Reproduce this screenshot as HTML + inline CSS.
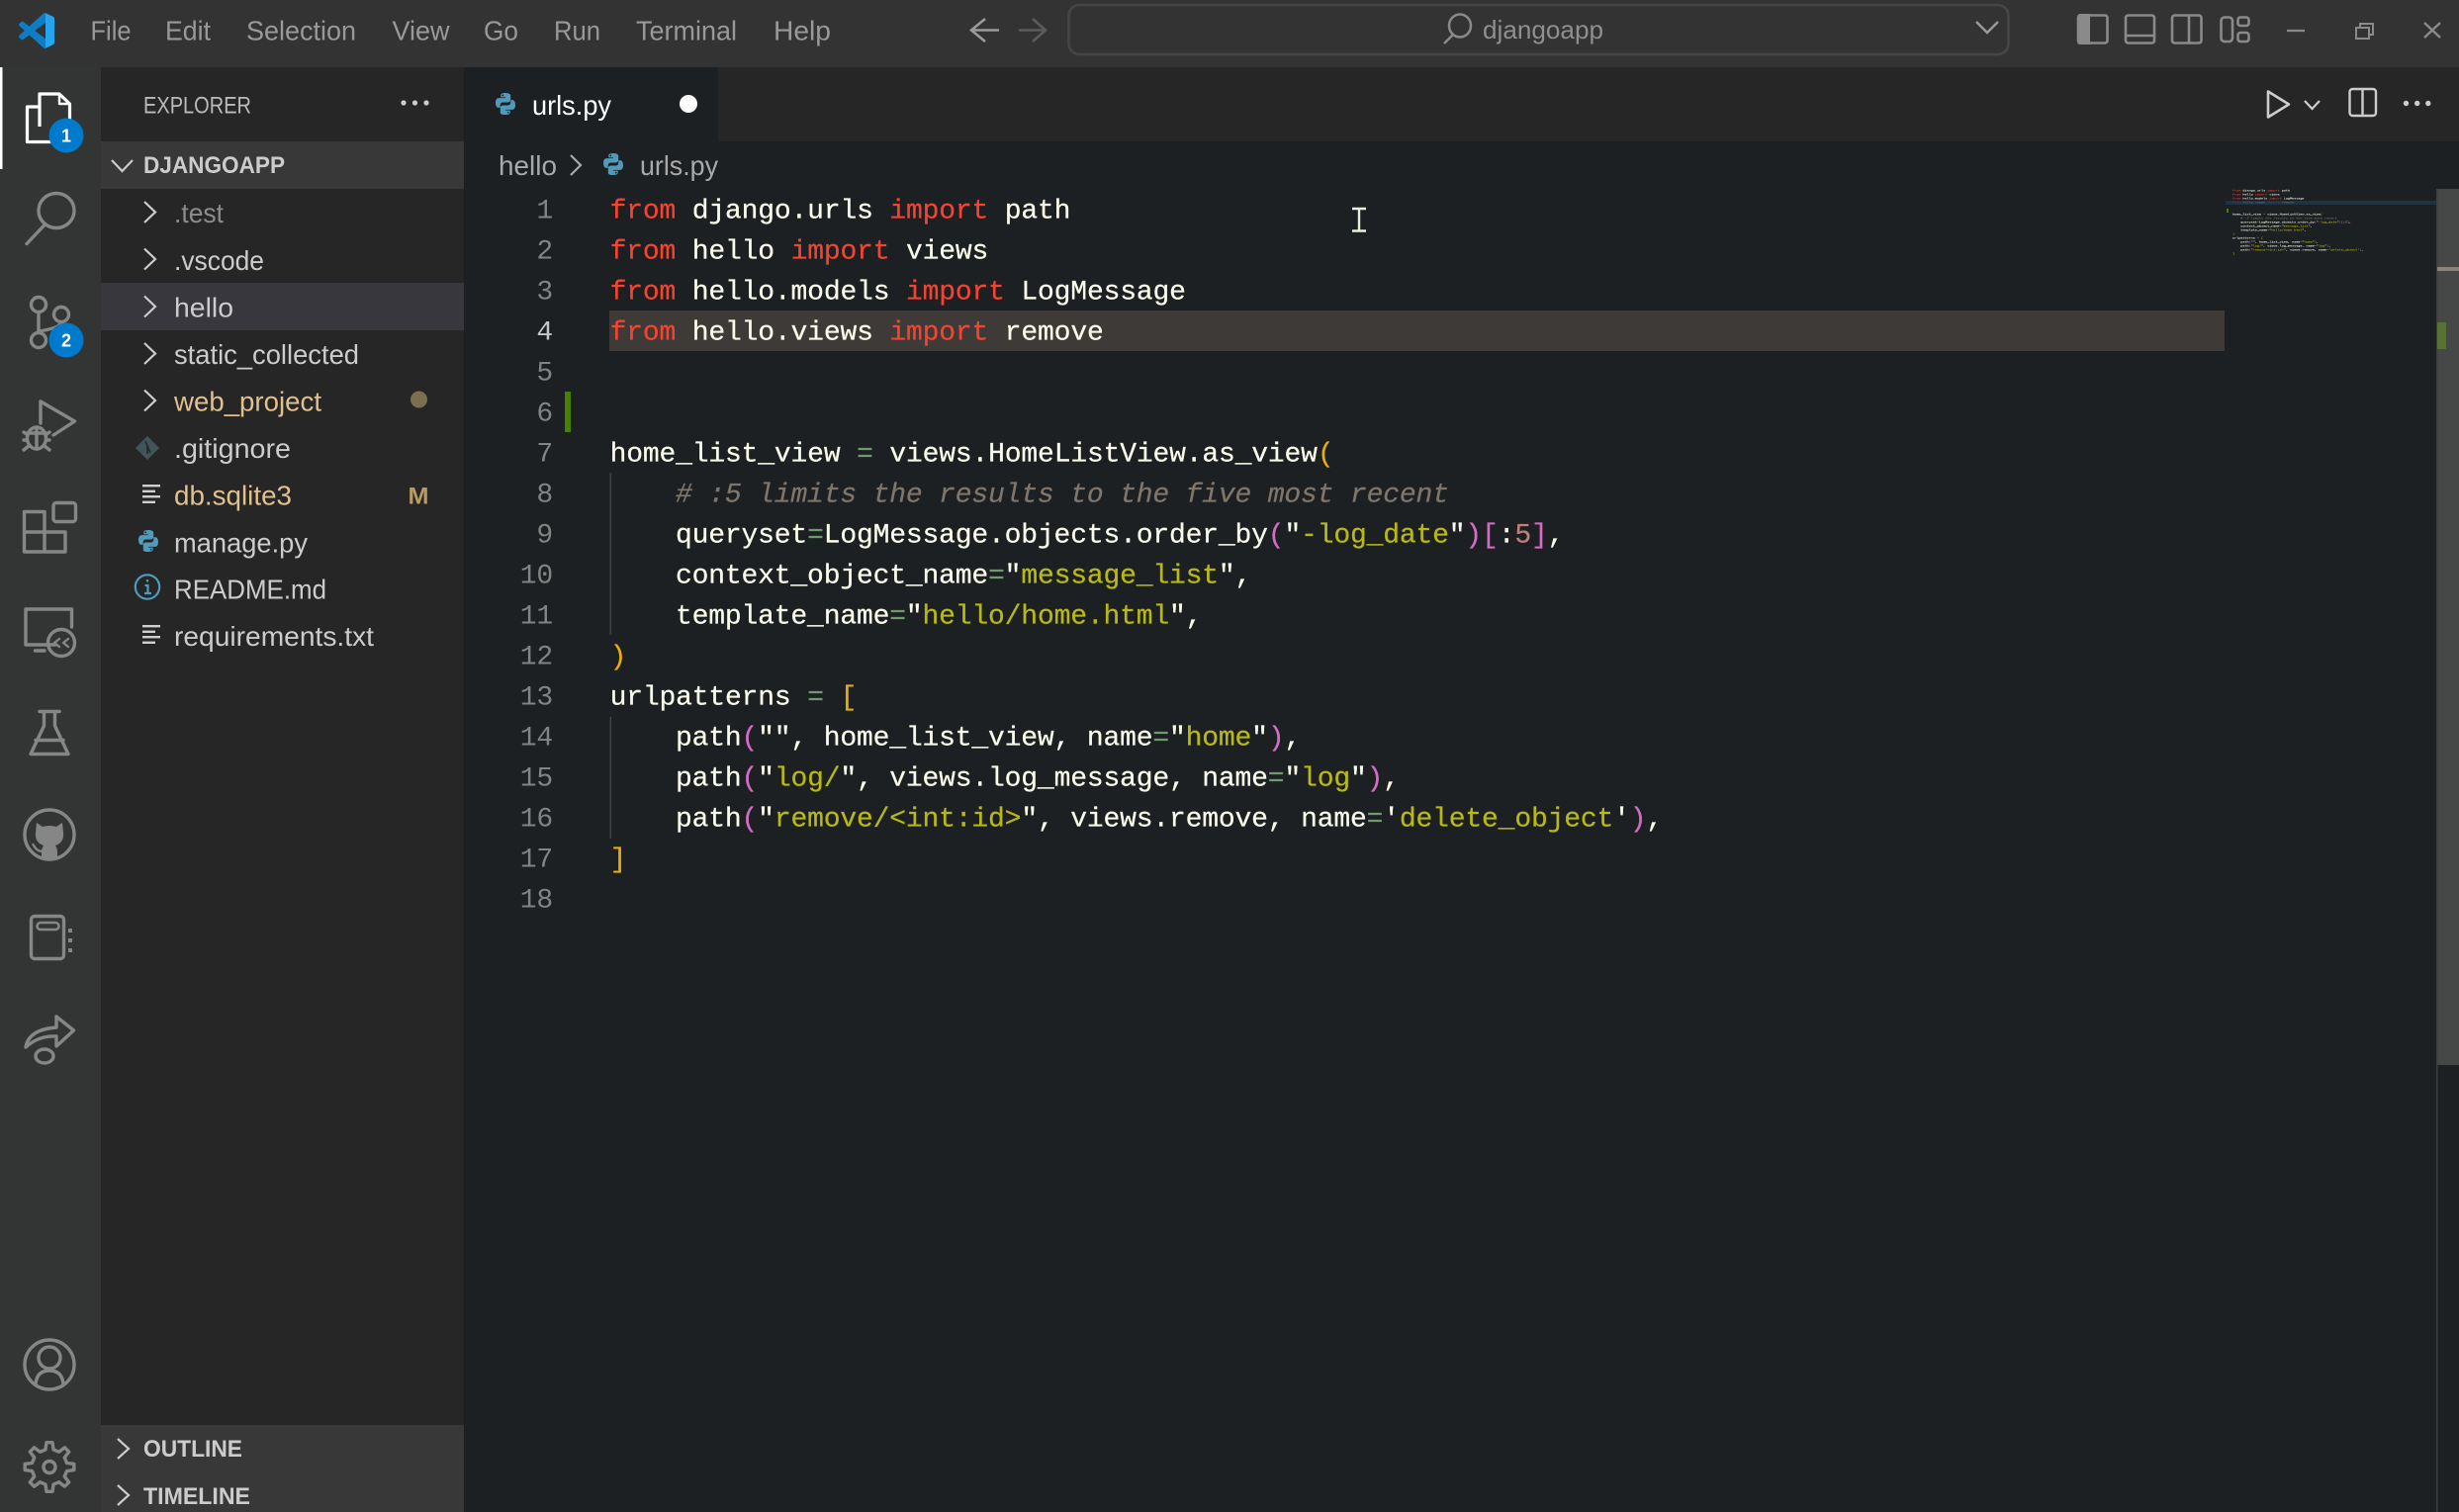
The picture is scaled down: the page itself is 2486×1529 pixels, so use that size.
<!DOCTYPE html>
<html lang="en">
<head>
<meta charset="utf-8">
<title>urls.py - djangoapp</title>
<style>
html,body{margin:0;padding:0;background:#1c2022;width:2486px;height:1529px;overflow:hidden}
svg{display:block;position:absolute;left:0;top:0}
text{font-family:"Liberation Sans",Arial,sans-serif;white-space:pre}
.c text,.c{font-family:"Liberation Mono","DejaVu Sans Mono",monospace;font-size:28px;letter-spacing:-.17px;fill:#fbfbec;stroke:#fbfbec;stroke-width:.25px}
.ln{font-family:"Liberation Mono","DejaVu Sans Mono",monospace;font-size:28px;letter-spacing:-.17px;fill:#828484;text-anchor:end}
.k{fill:#f5432f;stroke:#f5432f}.e{fill:#6f9a6f;stroke:#6f9a6f}.s{fill:#b8b914;stroke:#b8b914}.g{fill:#e6ad0b;stroke:#e6ad0b}.p{fill:#d46cc4;stroke:#d46cc4}.cm{fill:#7f756b;stroke:#7f756b;font-style:italic}.n{fill:#c07f7f;stroke:#c07f7f}
.m{font-size:28px;fill:#999}
.t{font-size:28px;fill:#cccccc}
.h{font-size:24px;font-weight:bold;fill:#cccccc}
.ic{fill:none;stroke:#868686;stroke-width:3.4;stroke-linecap:round;stroke-linejoin:round}
.ti{fill:none;stroke:#8a8a8a;stroke-width:2.6;stroke-linejoin:round}
.ch{fill:none;stroke:#cccccc;stroke-width:2.2}
</style>
</head>
<body>
<svg width="2486" height="1529" viewBox="0 0 2486 1529" xmlns="http://www.w3.org/2000/svg">
<defs>
<g id="py"><path fill="#519aba" fill-rule="evenodd" d="M11.9 1C7 1 7.3 3.1 7.3 3.1V5.4h4.7v.7H5.4S2 5.7 2 10.9c0 5.1 3 5 3 5h1.7v-2.4s-.1-3 2.9-3h4.8s2.8 0 2.8-2.7V3.9S17.7 1 11.9 1zM9.3 2.5a.9.9 0 1 1 0 1.8.9.9 0 0 1 0-1.8z"/><path fill="#519aba" fill-rule="evenodd" d="M12.1 23c4.9 0 4.6-2.1 4.6-2.1v-2.3H12v-.7h6.6s3.4.4 3.4-4.8c0-5.1-3-5-3-5h-1.7v2.4s.1 3-2.9 3H9.6s-2.8 0-2.8 2.7v4.9S6.3 23 12.1 23zm2.6-1.5a.9.9 0 1 1 0-1.8.9.9 0 0 1 0 1.8z"/></g>
<g id="lines" fill="#cfcfcf"><rect x="0" y="0" width="18" height="2.4"/><rect x="0" y="5.6" width="13" height="2.4"/><rect x="0" y="11" width="18" height="2.4"/><rect x="0" y="16.6" width="13" height="2.4"/></g>
<path id="chev" class="ch" d="M0 -10.5 L11 0 L0 10.5"/>
<g id="code" class="c">
<text x="616.6" y="220.5"><tspan class="k">from</tspan> django.urls <tspan class="k">import</tspan> path</text>
<text x="616.6" y="261.5"><tspan class="k">from</tspan> hello <tspan class="k">import</tspan> views</text>
<text x="616.6" y="302.5"><tspan class="k">from</tspan> hello.models <tspan class="k">import</tspan> LogMessage</text>
<text x="616.6" y="343.5"><tspan class="k">from</tspan> hello.views <tspan class="k">import</tspan> remove</text>
<text x="616.6" y="466.5">home_list_view <tspan class="e">=</tspan> views.HomeListView.as_view<tspan class="g">(</tspan></text>
<text x="683" y="507.5"><tspan class="cm"># :5 limits the results to the five most recent</tspan></text>
<text x="683" y="548.5">queryset<tspan class="e">=</tspan>LogMessage.objects.order_by<tspan class="p">(</tspan>"<tspan class="s">-log_date</tspan>"<tspan class="p">)[</tspan>:<tspan class="n">5</tspan><tspan class="p">]</tspan>,</text>
<text x="683" y="589.5">context_object_name<tspan class="e">=</tspan>"<tspan class="s">message_list</tspan>",</text>
<text x="683" y="630.5">template_name<tspan class="e">=</tspan>"<tspan class="s">hello/home.html</tspan>",</text>
<text x="616.6" y="671.5"><tspan class="g">)</tspan></text>
<text x="616.6" y="712.5">urlpatterns <tspan class="e">=</tspan> <tspan class="g">[</tspan></text>
<text x="683" y="753.5">path<tspan class="p">(</tspan>"", home_list_view, name<tspan class="e">=</tspan>"<tspan class="s">home</tspan>"<tspan class="p">)</tspan>,</text>
<text x="683" y="794.5">path<tspan class="p">(</tspan>"<tspan class="s">log/</tspan>", views.log_message, name<tspan class="e">=</tspan>"<tspan class="s">log</tspan>"<tspan class="p">)</tspan>,</text>
<text x="683" y="835.5">path<tspan class="p">(</tspan>"<tspan class="s">remove/&lt;int:id&gt;</tspan>", views.remove, name<tspan class="e">=</tspan>'<tspan class="s">delete_object</tspan>'<tspan class="p">)</tspan>,</text>
<text x="616.6" y="876.5"><tspan class="g">]</tspan></text>
</g>
</defs>

<!-- base -->
<rect width="2486" height="1529" fill="#1c2022"/>
<rect width="2486" height="68" fill="#333333"/>
<rect x="0" y="68" width="102" height="1461" fill="#333535"/>
<rect x="102" y="68" width="367" height="1461" fill="#262626"/>
<rect x="469" y="68" width="2017" height="75" fill="#262626"/>
<rect x="469" y="68" width="257" height="75" fill="#1c2022"/>

<!-- title bar -->
<g transform="translate(19,13) scale(.36)">
<path fill="#0d7ec6" fill-rule="evenodd" d="M96.5 10.8 75.9.9a6.2 6.2 0 0 0-7.1 1.2L29.4 38 12.2 25a4.2 4.2 0 0 0-5.3.2l-5.5 5a4.2 4.2 0 0 0 0 6.2L16.3 50 1.4 63.6a4.2 4.2 0 0 0 0 6.2l5.5 5a4.2 4.2 0 0 0 5.3.2L29.4 62l39.4 35.9a6.2 6.2 0 0 0 7.1 1.2l20.6-9.9a6.2 6.2 0 0 0 3.5-5.6V16.4a6.2 6.2 0 0 0-3.5-5.6zM75 72.7 45.1 50 75 27.3z"/>
<path fill="#25a5ee" d="M75 0.5a6.2 6.2 0 0 1 .9.4l20.6 9.9a6.2 6.2 0 0 1 3.5 5.6v67.1a6.2 6.2 0 0 1-3.5 5.6l-20.6 9.9a6.2 6.2 0 0 1-.9.4z"/>
</g>
<text class="m" x="91.5" y="40.5" textLength="41" lengthAdjust="spacingAndGlyphs">File</text>
<text class="m" x="167" y="40.5" textLength="46" lengthAdjust="spacingAndGlyphs">Edit</text>
<text class="m" x="249" y="40.5" textLength="111" lengthAdjust="spacingAndGlyphs">Selection</text>
<text class="m" x="396.5" y="40.5" textLength="58" lengthAdjust="spacingAndGlyphs">View</text>
<text class="m" x="489" y="40.5" textLength="35" lengthAdjust="spacingAndGlyphs">Go</text>
<text class="m" x="560" y="40.5" textLength="47" lengthAdjust="spacingAndGlyphs">Run</text>
<text class="m" x="643" y="40.5" textLength="102" lengthAdjust="spacingAndGlyphs">Terminal</text>
<text class="m" x="782" y="40.5" textLength="58" lengthAdjust="spacingAndGlyphs">Help</text>

<path d="M1010 30.5H982M996 19 L982 30.5 L996 42" fill="none" stroke="#9a9a9a" stroke-width="2.6"/>
<path d="M1030 30.5H1057M1044 19 L1057 30.5 L1044 42" fill="none" stroke="#5c5c5c" stroke-width="2.6"/>
<rect x="1080.5" y="5" width="950" height="50" rx="11" fill="#333333" stroke="#464646" stroke-width="2.6"/>
<ellipse cx="1476" cy="26" rx="11" ry="11.5" fill="none" stroke="#8a8a8a" stroke-width="2.5"/>
<path d="M1469 35 L1460 44" stroke="#8a8a8a" stroke-width="2.5"/>
<text x="1499" y="39" font-size="26" fill="#8f8f8f" textLength="122" lengthAdjust="spacingAndGlyphs">djangoapp</text>
<path d="M1998 22 L2009 33 L2020 22" fill="none" stroke="#9a9a9a" stroke-width="2.4"/>

<rect x="2101" y="15.5" width="29.5" height="28" rx="2.5" class="ti"/>
<path d="M2100 17 a3 3 0 0 1 3-3 h10 v31 h-10 a3 3 0 0 1-3-3z" fill="#8a8a8a"/>
<rect x="2149" y="15.5" width="29" height="28" rx="2.5" class="ti"/><path d="M2149 36 H2178" class="ti"/>
<rect x="2196" y="15.5" width="29.5" height="28" rx="2.5" class="ti"/><path d="M2213 15.5 V43.5" class="ti"/>
<rect x="2245.5" y="17.5" width="11.5" height="24.5" rx="3.5" class="ti"/>
<rect x="2262.5" y="17.5" width="11" height="8.5" rx="2.5" class="ti"/>
<rect x="2262.5" y="33" width="11" height="9" rx="2.5" class="ti"/>
<path d="M2312 31 H2330" stroke="#8a8a8a" stroke-width="2.2"/>
<path d="M2386 27 V24 H2399 V35 H2395 M2382 28 H2395 V39 H2382 Z" fill="none" stroke="#8a8a8a" stroke-width="2"/>
<path d="M2451 23 L2467 38 M2467 23 L2451 38" stroke="#8a8a8a" stroke-width="2.4"/>

<!-- activity bar -->
<rect x="0" y="68" width="2.5" height="103" fill="#ffffff"/>
<g fill="none" stroke="#ffffff" stroke-width="3.2" stroke-linejoin="round">
<path d="M40 108 H27.5 V143.5 H55"/>
<path d="M40 128 V95 H60 L70.5 105 V128"/>
<path d="M60 95 V105 H70.5" stroke-width="2.4"/>
</g>
<circle cx="67" cy="137" r="17.5" fill="#007acc"/>
<text x="67" y="143.5" font-size="18" font-weight="bold" fill="#fff" text-anchor="middle">1</text>

<g class="ic">
<ellipse cx="57" cy="213" rx="18" ry="17.5"/><path d="M45.5 227 L27 246.5"/>
<circle cx="39" cy="308" r="7.5"/><circle cx="62" cy="318" r="7.5"/><circle cx="39" cy="344" r="7.5"/>
<path d="M39 316 V336 M62 326 Q60 332 39 335"/>
<path d="M41 406 L75.5 426 L54 440"/>
<path d="M41 406 V428"/>
<ellipse cx="37" cy="443" rx="9.5" ry="11"/>
<path d="M27.5 438 H46.5 M37 433 V454 M24 437 L28 440 M50 437 L46 440 M24 445 H27.5 M50 445 H46.5 M24 455 L29 451 M50 455 L45 451"/>
<path d="M24.5 517.5 H45 V538 H66 V558 H24.5 Z M45 538 V558 M24.5 538 H45"/>
<rect x="54" y="508.5" width="22.5" height="19" rx="3"/>
<path d="M56 652 H26 V616 H72.5 V634 M35.5 658 H45"/>
<circle cx="62" cy="650" r="13.5"/>
<path d="M55 650 L60 646 M55 650 L60 654 M69 646 L64 650 L69 654" stroke-width="2.4"/>
<path d="M40 719.5 H60 M44.5 719.5 V734 L31 762.5 H69 L55.5 734 V719.5 M36 748.5 H64"/>
<circle cx="50" cy="844" r="25"/>
<path d="M33.5 854 Q37 861 43 861" stroke-width="2.4"/>
<rect x="31.5" y="926.5" width="33" height="43" rx="3.5"/>
<rect x="37.5" y="933" width="22" height="7" rx="3.5" stroke-width="2.6"/>
<path d="M71 939 V943 M71 949 V953 M71 959 V963" stroke-width="4" stroke-linecap="butt"/>
<path d="M26 1059 Q29 1041 57 1039 V1028 L74.5 1042 L57 1058 V1048 Q39 1047 26 1059 Z"/>
<ellipse cx="45" cy="1068" rx="9" ry="7"/>
<circle cx="50" cy="1380" r="25"/>
<circle cx="50" cy="1373" r="11"/>
<path d="M36 1400 Q37 1386 50 1386 Q63 1386 64 1400"/>
<circle cx="50" cy="1483.5" r="6"/>
</g>
<path fill="#868686" d="M37 832 L43 836 Q50 834 57 836 L63 832 L64 842 Q65 852 56 855 Q58 858 58 862 V868 Q54 870 50 870 Q46 870 42 868 V862 Q42 858 44 855 Q35 852 36 842 Z"/>
<path transform="translate(50,1483.5)" class="ic" d="M-4.05-17.54-3.05-24.81 3.05-24.81 4.05-17.54 9.54-15.26 15.39-19.7 19.7-15.39 15.26-9.54 17.54-4.05 24.81-3.05 24.81 3.05 17.54 4.05 15.26 9.54 19.7 15.39 15.39 19.7 9.54 15.26 4.05 17.54 3.05 24.81-3.05 24.81-4.05 17.54-9.54 15.26-15.39 19.7-19.7 15.39-15.26 9.54-17.54 4.05-24.81 3.05-24.81-3.05-17.54-4.05-15.26-9.54-19.7-15.39-15.39-19.7-9.54-15.26Z"/>
<circle cx="67" cy="344" r="17.5" fill="#007acc"/>
<text x="67" y="350.5" font-size="18" font-weight="bold" fill="#fff" text-anchor="middle">2</text>

<!-- sidebar -->
<text x="145" y="114.5" font-size="24" fill="#bbbbbb" textLength="109" lengthAdjust="spacingAndGlyphs">EXPLORER</text>
<g fill="#cccccc"><circle cx="408" cy="104" r="2.6"/><circle cx="419.5" cy="104" r="2.6"/><circle cx="431" cy="104" r="2.6"/></g>
<rect x="102" y="143" width="367" height="48" fill="#383838"/>
<path d="M113 162 L123.5 173 L134 162" class="ch"/>
<text class="h" x="145" y="175" textLength="143" lengthAdjust="spacingAndGlyphs">DJANGOAPP</text>
<rect x="102" y="286" width="367" height="48" fill="#37373d"/>

<use href="#chev" x="146" y="214.5"/>
<use href="#chev" x="146" y="262"/>
<use href="#chev" x="146" y="310"/>
<use href="#chev" x="146" y="357.5"/>
<use href="#chev" x="146" y="405"/>

<text class="t" x="176" y="225" style="fill:#8c8c8c" textLength="50" lengthAdjust="spacingAndGlyphs">.test</text>
<text class="t" x="176" y="273" textLength="91" lengthAdjust="spacingAndGlyphs">.vscode</text>
<text class="t" x="176" y="320.5" textLength="60" lengthAdjust="spacingAndGlyphs">hello</text>
<text class="t" x="176" y="368" textLength="187" lengthAdjust="spacingAndGlyphs">static_collected</text>
<text class="t" x="176" y="415.5" style="fill:#e2c08d" textLength="149" lengthAdjust="spacingAndGlyphs">web_project</text>
<circle cx="423.5" cy="404" r="8.5" fill="#7b6f50"/>
<path d="M149 441 L161 453 L149 465 L137 453 Z" fill="#41535b"/>
<path d="M147 446 L152 458 M149 451 V459" stroke="#262626" stroke-width="1.6"/>
<text class="t" x="176" y="463" textLength="118" lengthAdjust="spacingAndGlyphs">.gitignore</text>
<use href="#lines" x="144" y="490"/>
<text class="t" x="176" y="510.5" style="fill:#e2c08d" textLength="119" lengthAdjust="spacingAndGlyphs">db.sqlite3</text>
<text x="412.5" y="509.5" font-size="24" font-weight="bold" fill="#b99a63" textLength="21" lengthAdjust="spacingAndGlyphs">M</text>
<use href="#py" transform="translate(138,535)"/>
<text class="t" x="176" y="558.5" textLength="135" lengthAdjust="spacingAndGlyphs">manage.py</text>
<circle cx="149" cy="593.5" r="12.2" fill="none" stroke="#519aba" stroke-width="2.2"/>
<path d="M149 586 V588.4 M146.5 592 H149.5 V599.5 M146 600 H153" fill="none" stroke="#519aba" stroke-width="2.2"/>
<text class="t" x="176" y="605.5" textLength="154" lengthAdjust="spacingAndGlyphs">README.md</text>
<use href="#lines" x="144" y="632"/>
<text class="t" x="176" y="653" textLength="202" lengthAdjust="spacingAndGlyphs">requirements.txt</text>

<rect x="102" y="1441" width="367" height="88" fill="#383838"/>
<path d="M119 1455 L130 1465 L119 1475" class="ch"/>
<text class="h" x="145" y="1473" textLength="100" lengthAdjust="spacingAndGlyphs">OUTLINE</text>
<path d="M119 1502 L130 1512 L119 1522" class="ch"/>
<text class="h" x="145" y="1521" textLength="108" lengthAdjust="spacingAndGlyphs">TIMELINE</text>

<!-- tab -->
<use href="#py" transform="translate(499,93)"/>
<text x="538" y="116" font-size="28" fill="#ffffff" textLength="80" lengthAdjust="spacingAndGlyphs">urls.py</text>
<ellipse cx="696" cy="105" rx="9" ry="9" fill="#ffffff"/>

<!-- editor actions -->
<path d="M2293 92.5 L2314 105.5 L2293 118.5 Z" fill="none" stroke="#cccccc" stroke-width="2.6" stroke-linejoin="round"/>
<path d="M2330 102 L2337.5 110 L2345 102" fill="none" stroke="#cccccc" stroke-width="2.2"/>
<rect x="2375.5" y="90" width="26.5" height="27" rx="3" fill="none" stroke="#cccccc" stroke-width="2.4"/>
<path d="M2388.5 90 V117" stroke="#cccccc" stroke-width="2.4"/>
<g fill="#cccccc"><circle cx="2432.5" cy="104.5" r="2.7"/><circle cx="2443.7" cy="104.5" r="2.7"/><circle cx="2454.8" cy="104.5" r="2.7"/></g>

<!-- breadcrumbs -->
<text x="504" y="177" font-size="28" fill="#a9a9a9" textLength="59" lengthAdjust="spacingAndGlyphs">hello</text>
<path d="M577 157 L587 167 L577 177" fill="none" stroke="#a9a9a9" stroke-width="2.2"/>
<use href="#py" transform="translate(608,154)"/>
<text x="647" y="177" font-size="28" fill="#a9a9a9" textLength="79" lengthAdjust="spacingAndGlyphs">urls.py</text>

<!-- current line + gutter -->
<rect x="616" y="314" width="1633" height="41" fill="#3e3a38"/>
<rect x="571" y="396" width="6" height="41" fill="#487e02"/>
<rect x="616.5" y="478" width="1.6" height="164" fill="#404040"/>
<rect x="616.5" y="725" width="1.6" height="123" fill="#404040"/>

<!-- line numbers -->
<text class="ln" x="559" y="220.5">1</text>
<text class="ln" x="559" y="261.5">2</text>
<text class="ln" x="559" y="302.5">3</text>
<text class="ln" x="559" y="343.5" style="fill:#c6c6c6">4</text>
<text class="ln" x="559" y="384.5">5</text>
<text class="ln" x="559" y="425.5">6</text>
<text class="ln" x="559" y="466.5">7</text>
<text class="ln" x="559" y="507.5">8</text>
<text class="ln" x="559" y="548.5">9</text>
<text class="ln" x="559" y="589.5">10</text>
<text class="ln" x="559" y="630.5">11</text>
<text class="ln" x="559" y="671.5">12</text>
<text class="ln" x="559" y="712.5">13</text>
<text class="ln" x="559" y="753.5">14</text>
<text class="ln" x="559" y="794.5">15</text>
<text class="ln" x="559" y="835.5">16</text>
<text class="ln" x="559" y="876.5">17</text>
<text class="ln" x="559" y="917.5">18</text>

<!-- code -->
<use href="#code"/>

<!-- I-beam cursor -->
<path d="M1367 211 H1381 M1367 233.5 H1381 M1374 211 V233.5" stroke="#e8f0e0" stroke-width="2.4" fill="none"/>

<!-- minimap -->
<use href="#code" transform="matrix(.125 0 0 .0976 2179.95 171.9)"/>
<rect x="2250" y="203" width="213" height="4" fill="#1f3a52" fill-opacity=".72"/>
<rect x="2251" y="211" width="2" height="4" fill="#487e02"/>

<!-- scrollbar -->
<rect x="2463" y="191" width="1.5" height="1338" fill="#3d4042"/>
<rect x="2464.5" y="191" width="21.5" height="886" fill="#464847"/>
<rect x="2464" y="270" width="22" height="4" fill="#8a837a"/>
<rect x="2464" y="326" width="9" height="27" fill="#587233"/>
</svg>
</body>
</html>
